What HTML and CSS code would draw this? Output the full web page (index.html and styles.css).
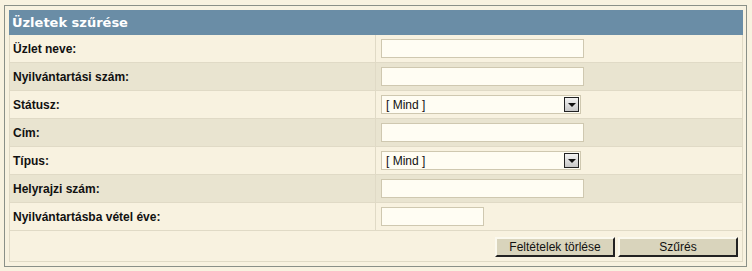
FILE: index.html
```html
<!DOCTYPE html>
<html lang="hu">
<head>
  <meta charset="UTF-8" />
  <title>Üzletek szűrése</title>
  <link rel="stylesheet" href="styles.css">
</head>
<body>

<div class="panel">
  <div class="panel-head">Üzletek szűrése</div>
  <table class="filter">
    <tr class="odd">
      <td class="lbl">Üzlet neve:</td>
      <td class="fld"><input type="text" class="txt"></td>
    </tr>
    <tr class="even">
      <td class="lbl">Nyilvántartási szám:</td>
      <td class="fld"><input type="text" class="txt"></td>
    </tr>
    <tr class="odd">
      <td class="lbl">Státusz:</td>
      <td class="fld">
        <div class="sel"><span>[ Mind ]</span><span class="arrow"></span></div>
      </td>
    </tr>
    <tr class="even">
      <td class="lbl">Cím:</td>
      <td class="fld"><input type="text" class="txt"></td>
    </tr>
    <tr class="odd">
      <td class="lbl">Típus:</td>
      <td class="fld">
        <div class="sel"><span>[ Mind ]</span><span class="arrow"></span></div>
      </td>
    </tr>
    <tr class="even">
      <td class="lbl">Helyrajzi szám:</td>
      <td class="fld"><input type="text" class="txt"></td>
    </tr>
    <tr class="odd">
      <td class="lbl">Nyilvántartásba vétel éve:</td>
      <td class="fld"><input type="text" class="txt short"></td>
    </tr>
    <tr class="odd btnrow">
      <td colspan="2">
        <div class="buttons">
          <button type="button" class="btn">Feltételek törlése</button>
          <button type="button" class="btn">Szűrés</button>
        </div>
      </td>
    </tr>
  </table>
</div>

</body>
</html>
```

FILE: styles.css
```css
html, body {
  margin: 0;
  padding: 0;
}
body {
  background: #f8f2e0;
  font-family: "Liberation Sans", Arial, sans-serif;
  padding: 5px 5px 0 4px;
}
.panel {
  width: 734px;
  border: 1px solid #8a9088;
  padding: 4px 3px 4px 4px;
  background: #f8f2e0;
}
.panel-head {
  background: #6a8da6;
  color: #fff;
  font-family: "DejaVu Sans", Verdana, sans-serif;
  font-weight: bold;
  font-size: 13px;
  height: 25px;
  line-height: 25px;
  padding-left: 3px;
}
.filter {
  width: 100%;
  border-collapse: collapse;
  border-left: 1px solid #e0dac6;
  border-right: 1px solid #e0dac6;
}
.filter td {
  height: 27px;
  padding: 0;
  border-bottom: 1px solid #e0dac6;
}
.odd { background: #f8f2e0; }
.even { background: #e9e4d0; }
.lbl {
  width: 362px;
  padding-left: 3px !important;
  font-size: 12px;
  font-weight: bold;
  color: #111;
  border-right: 1px solid #e0dac6;
  vertical-align: top;
  padding-top: 7px !important;
  height: 20px !important;
}
.fld {
  padding-left: 5px !important;
}
.txt {
  box-sizing: border-box;
  width: 203px;
  height: 19px;
  margin: 0;
  border: 1px solid #cfc8b0;
  background: #fffdf3;
  display: block;
}
.txt.short {
  width: 103px;
}
.sel {
  box-sizing: border-box;
  width: 200px;
  height: 19px;
  border: 1px solid #cfc8b0;
  background: #fffdf3;
  display: flex;
  align-items: center;
  justify-content: space-between;
  font-size: 12px;
  color: #111;
  padding-left: 4px;
}
.arrow {
  width: 15px;
  height: 15px;
  box-sizing: border-box;
  border: 1px solid #222;
  background: linear-gradient(#f2f2f2, #c8c8c8);
  margin-right: 1px;
  position: relative;
}
.arrow::after {
  content: "";
  position: absolute;
  left: 3px;
  top: 5px;
  border-left: 4px solid transparent;
  border-right: 4px solid transparent;
  border-top: 4px solid #111;
}
.btnrow td {
  height: 30px;
  border-bottom: 1px solid #e0dac6;
}
.buttons {
  display: flex;
  justify-content: flex-end;
  gap: 3px;
  padding: 6px 4px 0 0;
  height: 24px;
  align-items: flex-start;
}
.btn {
  box-sizing: border-box;
  height: 20px;
  width: 120px;
  font-family: "Liberation Sans", Arial, sans-serif;
  font-size: 12px;
  color: #111;
  background: #d9d4bc;
  border: 2px solid;
  border-color: #fbf9ee #222 #222 #fbf9ee;
  padding: 0;
}
```
